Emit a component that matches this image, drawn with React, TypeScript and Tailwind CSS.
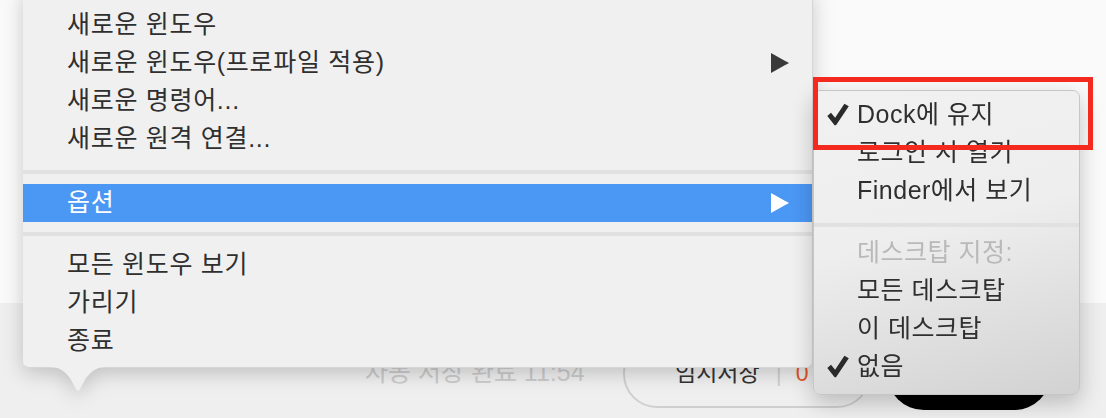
const FONT = { fontFamily: '"Liberation Sans", "Noto Sans CJK KR", sans-serif' };

function Arrow({ white }: { white?: boolean }) {
  return (
    <svg viewBox="0 0 18 20" className="h-[20px] w-[18px]">
      <path d="M0 0 L18 10 L0 20 Z" fill={white ? "#ffffff" : "#3a3a3a"} />
    </svg>
  );
}

function Check() {
  return (
    <svg viewBox="0 0 22 22" className="h-[23px] w-[22px]">
      <path d="M0.3 12.4 L4 9.2 L8.1 14.2 L17.4 0.3 L21.8 2.8 L9 21.8 L7.6 21.8 Z" fill="#2a2a2a" />
    </svg>
  );
}

function MainItem({ label, sub }: { label: string; sub?: boolean }) {
  return (
    <div className="flex h-[38px] items-center justify-between pl-[44px] pr-[23px] text-[25px] tracking-[0.7px] text-[#2f2f2f]">
      <span>{label}</span>
      {sub && <Arrow />}
    </div>
  );
}

function Sep({ top, bottom }: { top: string; bottom: string }) {
  return <div className={`h-[4px] bg-[#e1e1e1] ${top} ${bottom}`} />;
}

function SubItem({ label, checked, muted }: { label: string; checked?: boolean; muted?: boolean }) {
  return (
    <div
      className={`relative flex h-[38px] items-center pl-[43px] text-[25px] tracking-[0.5px] ${
        muted ? "text-[#b9b9b9]" : "text-[#2f2f2f]"
      }`}
    >
      {checked && (
        <span className="absolute left-[13px] top-[7px] flex">
          <Check />
        </span>
      )}
      <span>{label}</span>
    </div>
  );
}

export default function App() {
  return (
    <div className="relative h-[418px] w-[1106px] overflow-hidden" style={FONT}>
      {/* page behind the menus */}
      <div className="h-[303px] bg-[#fafafa]" />
      <div className="flex h-[115px] items-center bg-[#efefef] pl-[365px] pt-[25px]">
        <span className="w-[258px] text-[25px] text-[#cbcbcb]">자동 저장 완료 11:54</span>
        <div className="flex h-[70px] w-[248px] items-center rounded-[34px] border-2 border-[#cfcfcf] pl-[50px] text-[23px]">
          <span className="text-[#333333]">임시저장</span>
          <span className="ml-[16px] text-[#cfcfcf]">|</span>
          <span className="ml-[14px] text-[#e8572a]">0</span>
        </div>
        <div className="ml-[16px] h-[74px] w-[164px] rounded-full bg-black" />
      </div>

      {/* dock menu */}
      <div className="absolute left-[23px] top-[-10px] w-[790px] [filter:drop-shadow(0_5px_10px_rgba(0,0,0,0.2))]">
        <div className="rounded-b-[6px] border-r border-b border-[#d6d6d6] bg-[#f0f0f0] pt-[16px] pb-[7px]">
          <MainItem label="새로운 윈도우" />
          <MainItem label="새로운 윈도우(프로파일 적용)" sub />
          <MainItem label="새로운 명령어..." />
          <MainItem label="새로운 원격 연결..." />
          <Sep top="mt-[12px]" bottom="mb-[10px]" />
          <div className="flex h-[38px] items-center justify-between bg-[#4b97f4] pl-[44px] pr-[23px] text-[25px] tracking-[0.7px] text-white">
            <span>옵션</span>
            <Arrow white />
          </div>
          <Sep top="mt-[10px]" bottom="mb-[10px]" />
          <MainItem label="모든 윈도우 보기" />
          <MainItem label="가리기" />
          <MainItem label="종료" />
        </div>
        <svg viewBox="0 0 56 26" className="absolute left-[27px] top-full -mt-[1px] h-[26px] w-[56px]">
          <path d="M0 0 C10 0 14 4 20 11 L26 22 Q28 25 30 22 L36 11 C42 4 46 0 56 0 Z" fill="#f0f0f0" />
        </svg>
      </div>

      {/* options submenu */}
      <div className="absolute left-[813px] top-[90px] h-[305px] w-[267px] rounded-[7px] border border-[#c6c6c6] bg-[linear-gradient(165deg,#f1f1f1_0%,#eeeeee_45%,#d2d2d2_100%)] pt-[5px] shadow-[0_8px_22px_rgba(0,0,0,0.22)]">
        <SubItem label="Dock에 유지" checked />
        <SubItem label="로그인 시 열기" />
        <SubItem label="Finder에서 보기" />
        <Sep top="mt-[13px]" bottom="mb-[7px]" />
        <SubItem label="데스크탑 지정:" muted />
        <SubItem label="모든 데스크탑" />
        <SubItem label="이 데스크탑" />
        <SubItem label="없음" checked />
      </div>

      {/* annotation box */}
      <div className="absolute left-[813px] top-[77px] h-[73px] w-[280px] border-[5px] border-[#f42a1f]" />
    </div>
  );
}
